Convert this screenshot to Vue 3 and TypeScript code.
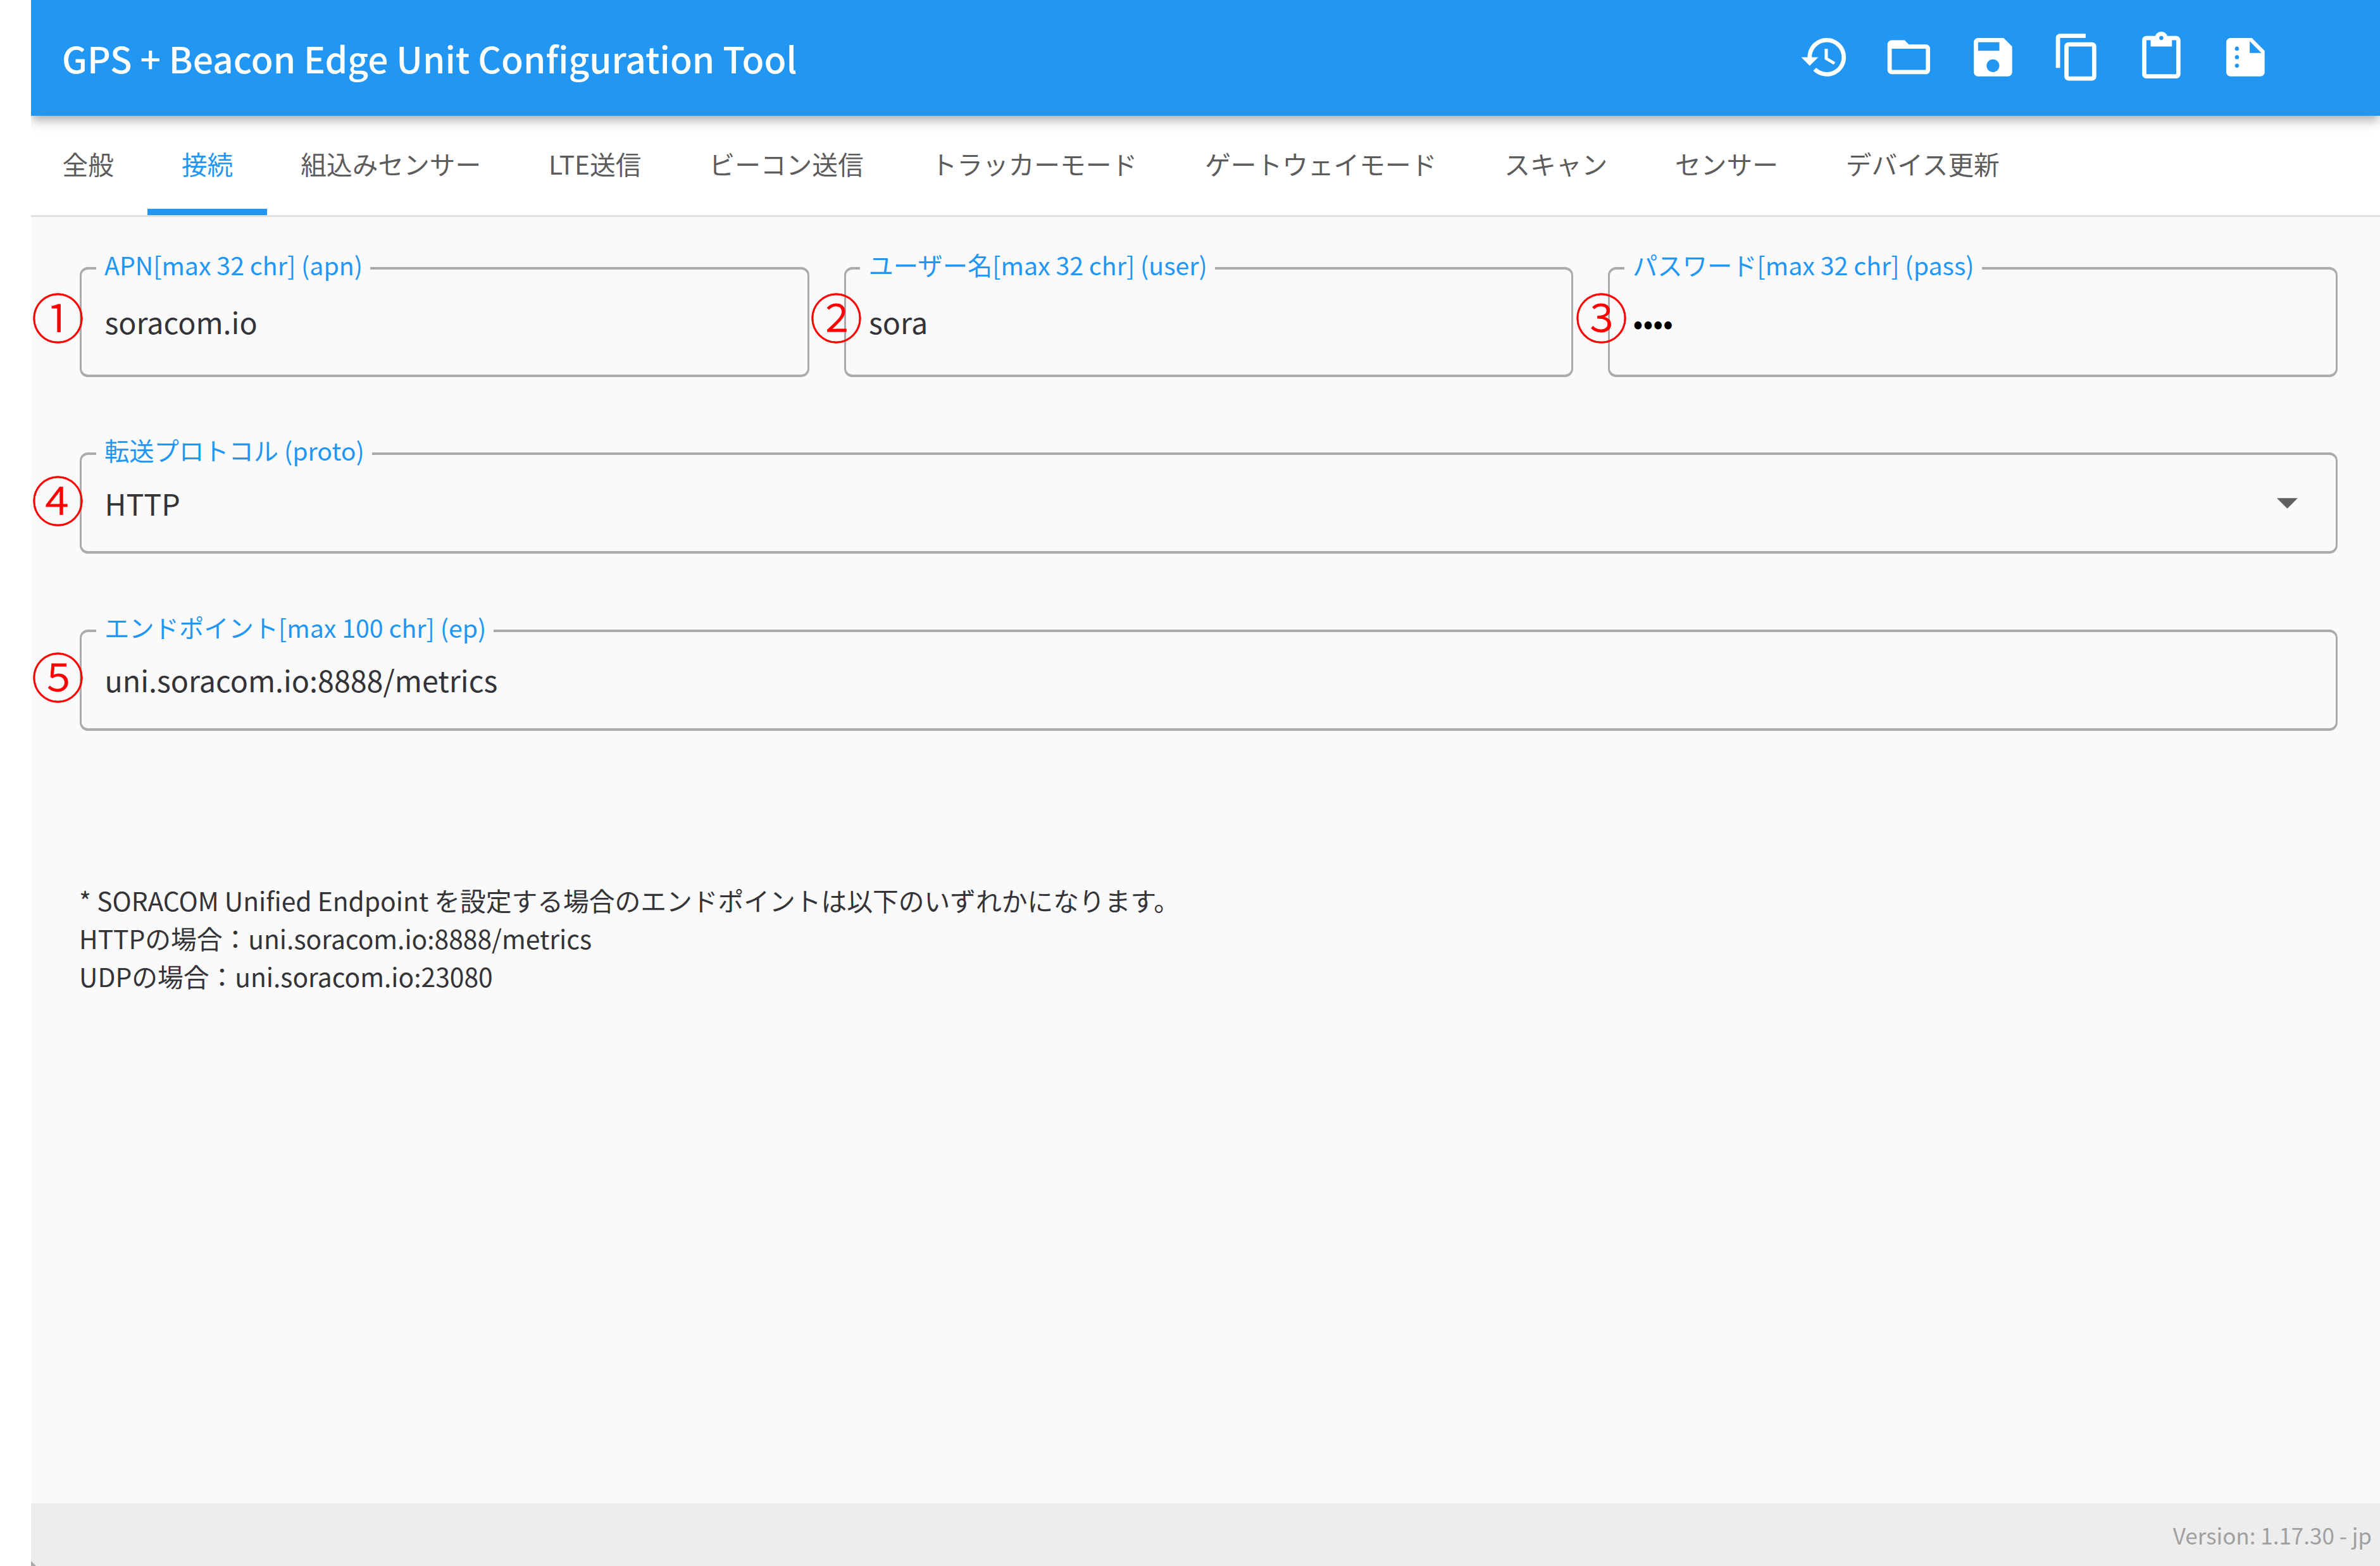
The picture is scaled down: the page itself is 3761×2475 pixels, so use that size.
<script setup lang="ts">
interface Field {
  mark: string
  label: string
  value: string
  kind?: 'select' | 'password'
}

const title = 'GPS + Beacon Edge Unit Configuration Tool'

const actions: { name: string; path: string }[] = [
  {
    name: 'history',
    path: 'M13 3c-4.97 0-9 4.03-9 9H1l3.89 3.89.07.14L9 12H6c0-3.87 3.13-7 7-7s7 3.13 7 7-3.13 7-7 7c-1.93 0-3.68-.79-4.94-2.06l-1.42 1.42C8.27 19.99 10.51 21 13 21c4.97 0 9-4.03 9-9s-4.03-9-9-9zm-1 5v5l4.28 2.54.72-1.21-3.5-2.08V8H12z',
  },
  {
    name: 'open',
    path: 'M20 6h-8l-2-2H4c-1.1 0-1.99.9-1.99 2L2 18c0 1.1.9 2 2 2h16c1.1 0 2-.9 2-2V8c0-1.1-.9-2-2-2zm0 12H4V8h16v10z',
  },
  {
    name: 'save',
    path: 'M17 3H5c-1.11 0-2 .9-2 2v14c0 1.1.89 2 2 2h14c1.1 0 2-.9 2-2V7l-4-4zm-5 16c-1.66 0-3-1.34-3-3s1.34-3 3-3 3 1.34 3 3-1.34 3-3 3zm3-10H5V5h10v4z',
  },
  {
    name: 'copy',
    path: 'M16 1H4c-1.1 0-2 .9-2 2v14h2V3h12V1zm3 4H8c-1.1 0-2 .9-2 2v14c0 1.1.9 2 2 2h11c1.1 0 2-.9 2-2V7c0-1.1-.9-2-2-2zm0 16H8V7h11v14z',
  },
  {
    name: 'paste',
    path: 'M19 2h-4.18C14.4.84 13.3 0 12 0c-1.3 0-2.4.84-2.82 2H5c-1.1 0-2 .9-2 2v16c0 1.1.9 2 2 2h14c1.1 0 2-.9 2-2V4c0-1.1-.9-2-2-2zm-7 0c.55 0 1 .45 1 1s-.45 1-1 1-1-.45-1-1 .45-1 1-1zm7 18H5V4h2v3h10V4h2v16z',
  },
  {
    name: 'summary',
    path: 'M15 3H5c-1.1 0-1.99.9-1.99 2L3 19c0 1.1.89 2 1.99 2H19c1.1 0 2-.9 2-2V9l-6-6zM8 17c-.55 0-1-.45-1-1s.45-1 1-1 1 .45 1 1-.45 1-1 1zm0-4c-.55 0-1-.45-1-1s.45-1 1-1 1 .45 1 1-.45 1-1 1zm0-4c-.55 0-1-.45-1-1s.45-1 1-1 1 .45 1 1-.45 1-1 1zm6 1V4.500l5.500 5.500H14z',
  },
]

const tabs = [
  '全般',
  '接続',
  '組込みセンサー',
  'LTE送信',
  'ビーコン送信',
  'トラッカーモード',
  'ゲートウェイモード',
  'スキャン',
  'センサー',
  'デバイス更新',
]
const activeTab = '接続'

const rows: Field[][] = [
  [
    { mark: '①', label: 'APN[max 32 chr] (apn)', value: 'soracom.io' },
    { mark: '②', label: 'ユーザー名[max 32 chr] (user)', value: 'sora' },
    { mark: '③', label: 'パスワード[max 32 chr] (pass)', value: '••••', kind: 'password' },
  ],
  [{ mark: '④', label: '転送プロトコル (proto)', value: 'HTTP', kind: 'select' }],
  [{ mark: '⑤', label: 'エンドポイント[max 100 chr] (ep)', value: 'uni.soracom.io:8888/metrics' }],
]

const notes = [
  '* SORACOM Unified Endpoint を設定する場合のエンドポイントは以下のいずれかになります。',
  'HTTPの場合：uni.soracom.io:8888/metrics',
  'UDPの場合：uni.soracom.io:23080',
]
</script>

<template>
  <div class="page" lang="ja">
    <div class="app">
      <header class="bar">
        <h1 class="title">{{ title }}</h1>
        <div class="actions">
          <svg v-for="a in actions" :key="a.name" class="icon" viewBox="0 0 24 24">
            <path :d="a.path" />
          </svg>
        </div>
      </header>

      <nav class="tabs">
        <div v-for="t in tabs" :key="t" class="tab" :class="{ active: t === activeTab }">{{ t }}</div>
      </nav>

      <main class="content">
        <div v-for="(row, i) in rows" :key="i" class="row" :class="{ triple: row.length > 1 }">
          <div v-for="f in row" :key="f.mark" class="field">
            <span class="label">{{ f.label }}</span>
            <span class="value" :class="f.kind">{{ f.value }}</span>
            <svg v-if="f.kind === 'select'" class="arrow" viewBox="0 0 10 5"><path d="M0 0l5 5 5-5z" /></svg>
            <span class="mark">{{ f.mark }}</span>
          </div>
        </div>

        <div class="notes">
          <p v-for="n in notes" :key="n">{{ n }}</p>
        </div>
      </main>

      <footer class="footer">Version: 1.17.30 - jp</footer>
    </div>
  </div>
</template>

<style>
body {
  background: #fff;
}
</style>

<style scoped>
.page {
  box-sizing: border-box;
  height: 2475px;
  padding-left: 49px;
  overflow: hidden;
  font-family: "Noto Sans CJK JP", "Noto Sans", sans-serif;
  color: #333338;
}
.app {
  position: relative;
  display: flex;
  flex-direction: column;
  height: 100%;
  overflow: hidden;
  background: #fafafa;
}
/* window frame corner */
.app::after {
  content: "";
  position: absolute;
  left: 0;
  bottom: 0;
  width: 8px;
  height: 8px;
  background: #a8a8a8;
  clip-path: polygon(0 0, 100% 100%, 0 100%);
}
.bar {
  position: relative;
  z-index: 1;
  flex: none;
  display: flex;
  align-items: center;
  justify-content: space-between;
  box-sizing: border-box;
  height: 183px;
  padding: 0 172px 0 49px;
  background: #2196f3;
  color: #fff;
  box-shadow: 0 7px 13px -3px rgba(0, 0, 0, 0.2), 0 12px 16px rgba(0, 0, 0, 0.12), 0 3px 30px rgba(0, 0, 0, 0.05);
}
.title {
  margin: 0;
  padding-bottom: 2px;
  font-size: 56.9px;
  font-weight: 500;
  line-height: 84px;
  white-space: nowrap;
}
.actions {
  display: flex;
  gap: 52.2px;
  padding-bottom: 3px;
}
.icon {
  display: block;
  width: 80.8px;
  height: 80.8px;
  fill: #fff;
}
.tabs {
  flex: none;
  display: flex;
  box-sizing: border-box;
  height: 160px;
  border-bottom: 3px solid #e0e0e0;
  background: #fff;
}
.tab {
  display: flex;
  align-items: center;
  box-sizing: border-box;
  padding: 4px 53.5px 0;
  border-bottom: 10px solid transparent;
  font-size: 40.7px;
  line-height: 60px;
  color: #5c5c5c;
  white-space: nowrap;
}
.tab:first-child {
  margin-left: -4px;
}
.tab.active {
  color: #2196f3;
  border-bottom-color: #2196f3;
}
.content {
  flex: 1;
  padding: 79px 67px 0 77px;
}
.row {
  display: flex;
  gap: 54.6px;
  margin-bottom: 119.3px;
}
.field {
  --mark-x: -34.6px;
  --mark-y: 77.5px;
  position: relative;
  flex: 1;
  display: flex;
  align-items: center;
  justify-content: space-between;
  box-sizing: border-box;
  height: 160px;
  padding: 0 60px 1.5px 36.5px;
  border: solid #ababab;
  border-width: 4px 3px;
  border-radius: 13px;
}
.triple .field {
  --mark-y: 82px;
  height: 174px;
  padding-bottom: 3px;
}
.triple .field:nth-child(2) {
  --mark-x: -12px;
}
.triple .field:nth-child(3) {
  --mark-x: -10.5px;
}
.label {
  position: absolute;
  top: -36px;
  left: 22.5px;
  padding: 0 12px 0 13.5px;
  background: #fafafa;
  font-size: 39.3px;
  line-height: 56px;
  color: #2196f3;
  white-space: nowrap;
}
.value {
  font-size: 46.6px;
  line-height: 68px;
  white-space: nowrap;
}
.value.password {
  color: #000;
}
.arrow {
  width: 33px;
  height: 17px;
  margin-top: 2px;
  fill: #606060;
}
.mark {
  position: absolute;
  left: calc(var(--mark-x) - 45px);
  top: calc(var(--mark-y) - 51px);
  width: 84px;
  font-size: 84px;
  font-weight: 300;
  line-height: 84px;
  color: #f00;
  -webkit-text-stroke: 0.8px #f00;
}
.notes {
  padding-top: 119px;
  margin-left: -1px;
  font-size: 40.75px;
  line-height: 59.9px;
}
.notes p {
  margin: 0;
  white-space: nowrap;
}
.footer {
  flex: none;
  box-sizing: border-box;
  height: 99.5px;
  padding-right: 13px;
  background: #ededed;
  font-size: 35px;
  line-height: 100px;
  text-align: right;
  color: #a0a0a0;
}
</style>
